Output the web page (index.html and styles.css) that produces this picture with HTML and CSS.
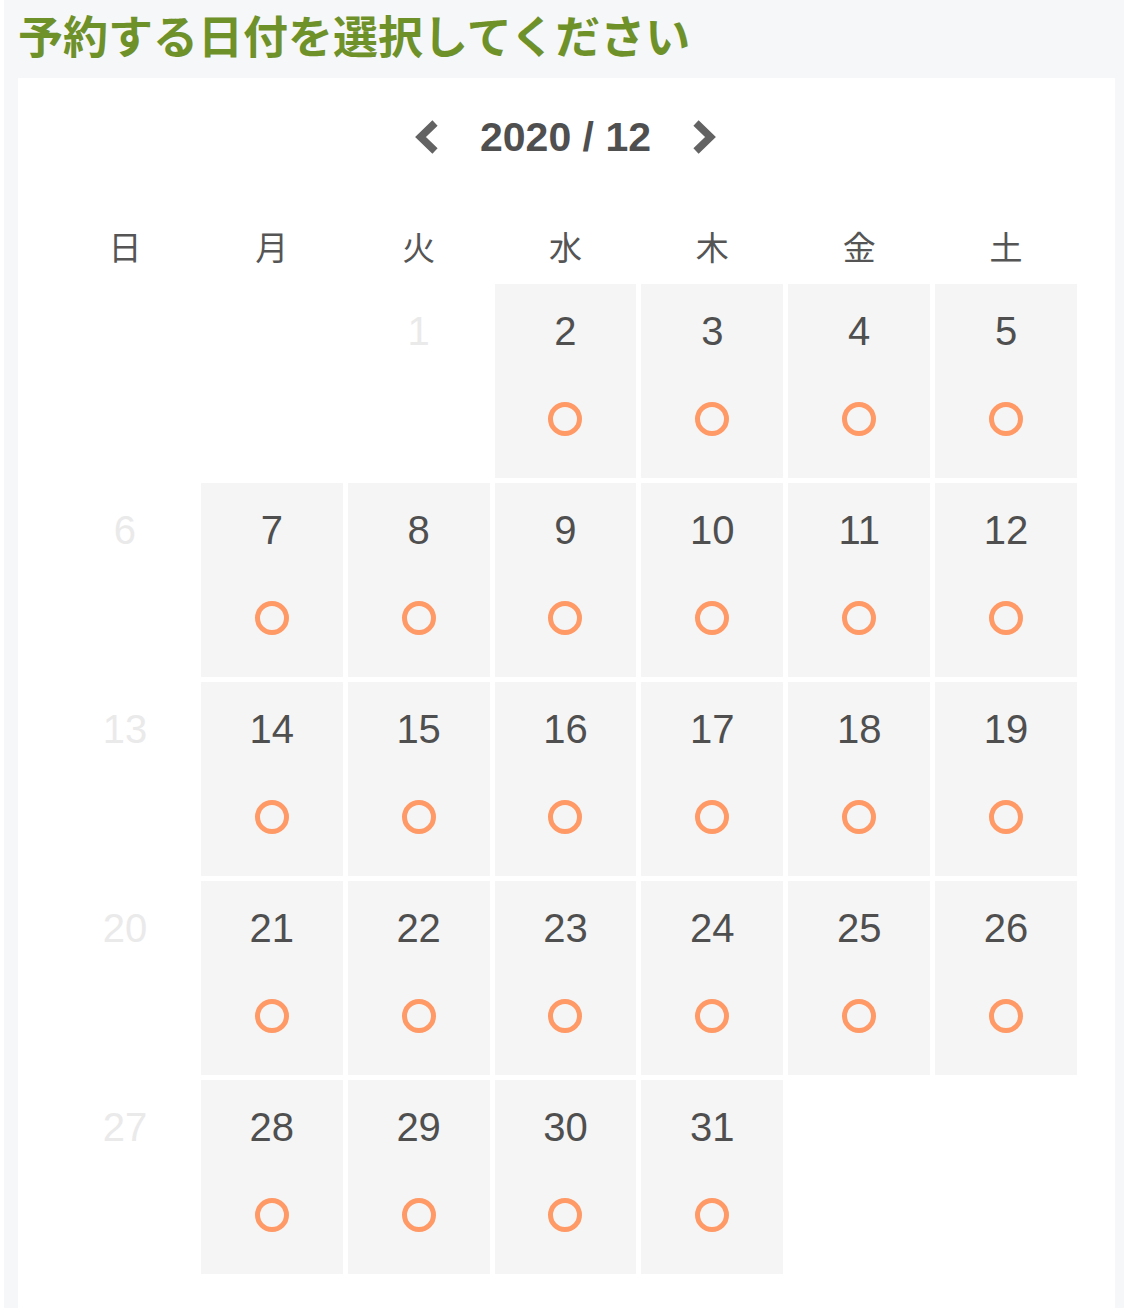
FILE: index.html
```html
<!DOCTYPE html>
<html lang="ja">
<head>
    <meta charset="UTF-8">
    <meta name="viewport" content="width=device-width, initial-scale=1.0">
    <title>予約日選択</title>
    <link rel="stylesheet" href="styles.css">
</head>
<body>
    <div id="reserve">
        <h2 class="reserve-title">予約する日付を選択してください</h2>
        <div class="calendar">
            <div class="calendar-nav">
                <button class="nav-button" aria-label="前の月">
                    <svg width="30" height="38" viewBox="0 0 30 38"><polyline points="24,5 9.5,19 24,33" fill="none" stroke="#636363" stroke-width="7.5" stroke-linejoin="miter"/></svg>
                </button>
                <div class="calendar-month">2020 / 12</div>
                <button class="nav-button" aria-label="次の月">
                    <svg width="30" height="38" viewBox="0 0 30 38"><polyline points="6,5 20.5,19 6,33" fill="none" stroke="#636363" stroke-width="7.5" stroke-linejoin="miter"/></svg>
                </button>
            </div>
            <div class="weekdays">
                <div>日</div>
                <div>月</div>
                <div>火</div>
                <div>水</div>
                <div>木</div>
                <div>金</div>
                <div>土</div>
            </div>
            <div class="days">
                <div class="day empty"></div>
                <div class="day empty"></div>
                <div class="day disabled"><span class="day-num">1</span></div>
                <div class="day"><span class="day-num">2</span><span class="mark"></span></div>
                <div class="day"><span class="day-num">3</span><span class="mark"></span></div>
                <div class="day"><span class="day-num">4</span><span class="mark"></span></div>
                <div class="day"><span class="day-num">5</span><span class="mark"></span></div>

                <div class="day disabled"><span class="day-num">6</span></div>
                <div class="day"><span class="day-num">7</span><span class="mark"></span></div>
                <div class="day"><span class="day-num">8</span><span class="mark"></span></div>
                <div class="day"><span class="day-num">9</span><span class="mark"></span></div>
                <div class="day"><span class="day-num">10</span><span class="mark"></span></div>
                <div class="day"><span class="day-num">11</span><span class="mark"></span></div>
                <div class="day"><span class="day-num">12</span><span class="mark"></span></div>

                <div class="day disabled"><span class="day-num">13</span></div>
                <div class="day"><span class="day-num">14</span><span class="mark"></span></div>
                <div class="day"><span class="day-num">15</span><span class="mark"></span></div>
                <div class="day"><span class="day-num">16</span><span class="mark"></span></div>
                <div class="day"><span class="day-num">17</span><span class="mark"></span></div>
                <div class="day"><span class="day-num">18</span><span class="mark"></span></div>
                <div class="day"><span class="day-num">19</span><span class="mark"></span></div>

                <div class="day disabled"><span class="day-num">20</span></div>
                <div class="day"><span class="day-num">21</span><span class="mark"></span></div>
                <div class="day"><span class="day-num">22</span><span class="mark"></span></div>
                <div class="day"><span class="day-num">23</span><span class="mark"></span></div>
                <div class="day"><span class="day-num">24</span><span class="mark"></span></div>
                <div class="day"><span class="day-num">25</span><span class="mark"></span></div>
                <div class="day"><span class="day-num">26</span><span class="mark"></span></div>

                <div class="day disabled"><span class="day-num">27</span></div>
                <div class="day"><span class="day-num">28</span><span class="mark"></span></div>
                <div class="day"><span class="day-num">29</span><span class="mark"></span></div>
                <div class="day"><span class="day-num">30</span><span class="mark"></span></div>
                <div class="day"><span class="day-num">31</span><span class="mark"></span></div>
                <div class="day empty"></div>
                <div class="day empty"></div>
            </div>
        </div>
    </div>
</body>
</html>
```

FILE: styles.css
```css
body {
    margin: 0;
    background: #fff;
    font-family: "Liberation Sans", "Noto Sans CJK JP", sans-serif;
    color: #4d4d4d;
}
/* 外枠 */
#reserve {
    margin-left: 4px;
    padding: 0 9px 0 14px;
    background: #f6f7f9;
    min-height: 1308px;
}
.reserve-title {
    margin: 0 0 6px;
    height: 72px;
    line-height: 70px;
    font-family: "Noto Sans CJK JP", sans-serif;
    font-size: 45px;
    font-weight: bold;
    color: #6f912a;
    white-space: nowrap;
}
/* カレンダー本体 */
.calendar {
    background: #fff;
    padding: 34px 38px 40px 36px;
    min-height: 1200px;
}
.calendar-nav {
    display: flex;
    justify-content: center;
    align-items: center;
    gap: 39px;
    height: 50px;
}
.nav-button {
    background: none;
    border: none;
    padding: 0;
    display: flex;
    cursor: pointer;
}
.calendar-month {
    font-size: 41px;
    font-weight: bold;
    line-height: 50px;
    color: #4f4f4f;
}
.weekdays,
.days {
    display: grid;
    grid-template-columns: repeat(7, 1fr);
    column-gap: 5px;
}
.weekdays {
    margin-top: 60px;
    margin-bottom: 14px;
}
.weekdays div {
    text-align: center;
    font-family: "Noto Sans CJK JP", sans-serif;
    font-size: 33px;
    line-height: 48px;
    color: #555;
}
.days {
    grid-auto-rows: 194px;
    row-gap: 5px;
}
.day {
    background: #f5f5f5;
    display: flex;
    flex-direction: column;
    align-items: center;
    padding-top: 24px;
    box-sizing: border-box;
}
.day.empty,
.day.disabled {
    background: none;
}
.day-num {
    font-size: 40px;
    line-height: 46px;
    color: #4f4f4f;
}
.day.disabled .day-num {
    color: #eaeaea;
}
.mark {
    margin-top: 48px;
    width: 34px;
    height: 34px;
    border: 5px solid #ff9966;
    border-radius: 50%;
    box-sizing: border-box;
}
```
